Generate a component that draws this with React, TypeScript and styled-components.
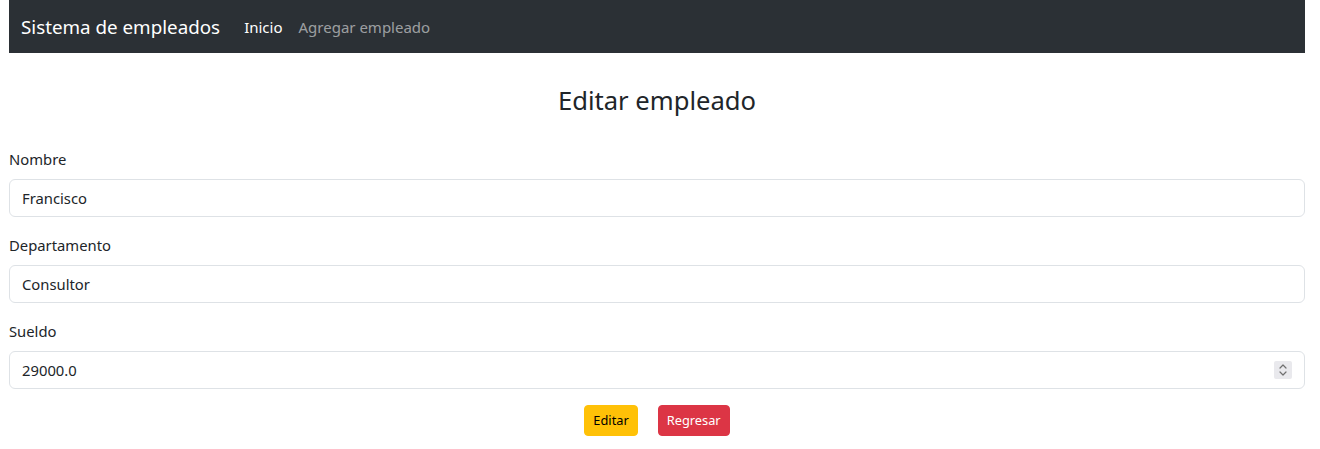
import React from "react";
import styled, { createGlobalStyle } from "styled-components";

const Global = createGlobalStyle`
  * { box-sizing: border-box; }
  body {
    margin: 0;
    background: #fff;
    color: #212529;
    font-family: "Noto Sans", "Open Sans", sans-serif;
    font-size: 14.8px;
    line-height: 24px;
  }
`;

const Page = styled.div`
  width: 1296px;
  margin-left: 9px;
`;

const NavBar = styled.nav`
  height: 53px;
  background: #2b3035;
  display: flex;
  align-items: center;
  padding: 0 12px;
`;

const Brand = styled.a`
  font-size: 18.8px;
  color: #fff;
  margin-right: 16px;
  text-decoration: none;
  line-height: 30px;
`;

const NavLink = styled.a<{ $active?: boolean }>`
  padding: 8px;
  font-size: 15px;
  text-decoration: none;
  color: ${(p) => (p.$active ? "#fff" : "rgba(255,255,255,0.55)")};
`;

const Title = styled.h3`
  margin: 31px 0 29px;
  font-size: 25.6px;
  font-weight: 400;
  line-height: 34px;
  text-align: center;
`;

const Field = styled.div`
  margin-bottom: 16px;
`;

const Label = styled.label`
  display: block;
  margin-bottom: 8px;
`;

const InputWrap = styled.div`
  position: relative;
`;

const Input = styled.input`
  display: block;
  width: 100%;
  height: 38px;
  padding: 6px 12px;
  font: inherit;
  color: #212529;
  background: #fff;
  border: 1px solid #dee2e6;
  border-radius: 6px;
  outline: none;
  -moz-appearance: textfield;
  &::-webkit-inner-spin-button,
  &::-webkit-outer-spin-button {
    -webkit-appearance: none;
    margin: 0;
  }
`;

const Spinner = styled.span`
  position: absolute;
  right: 13px;
  top: 10px;
  width: 18px;
  height: 18px;
  background: #e9e9ed;
  border-radius: 2px;
  display: flex;
  align-items: center;
  justify-content: center;
  pointer-events: none;
`;

const Actions = styled.div`
  display: flex;
  justify-content: center;
  gap: 20px;
`;

const Button = styled.button<{ $variant: "warning" | "danger" }>`
  font: inherit;
  font-size: 12.8px;
  line-height: 21px;
  padding: 4px 8px;
  border: 1px solid ${(p) => (p.$variant === "warning" ? "#ffc107" : "#dc3545")};
  border-radius: 4px;
  background: ${(p) => (p.$variant === "warning" ? "#ffc107" : "#dc3545")};
  color: ${(p) => (p.$variant === "warning" ? "#000" : "#fff")};
  cursor: pointer;
`;

export default function App() {
  return (
    <>
      <Global />
      <Page>
        <NavBar>
          <Brand href="#">Sistema de empleados</Brand>
          <NavLink $active href="#">Inicio</NavLink>
          <NavLink href="#">Agregar empleado</NavLink>
        </NavBar>
        <Title>Editar empleado</Title>
        <form>
          <Field>
            <Label>Nombre</Label>
            <Input type="text" defaultValue="Francisco" />
          </Field>
          <Field>
            <Label>Departamento</Label>
            <Input type="text" defaultValue="Consultor" />
          </Field>
          <Field>
            <Label>Sueldo</Label>
            <InputWrap>
              <Input type="number" step="any" defaultValue="29000.0" />
              <Spinner aria-hidden>
                <svg width="10" height="14" viewBox="0 0 10 14" fill="none" stroke="#707070" strokeWidth="1.2" strokeLinecap="round" strokeLinejoin="round">
                  <path d="M2 5 L5 2 L8 5" />
                  <path d="M2 9 L5 12 L8 9" />
                </svg>
              </Spinner>
            </InputWrap>
          </Field>
          <Actions>
            <Button type="button" $variant="warning">Editar</Button>
            <Button type="button" $variant="danger">Regresar</Button>
          </Actions>
        </form>
      </Page>
    </>
  );
}
